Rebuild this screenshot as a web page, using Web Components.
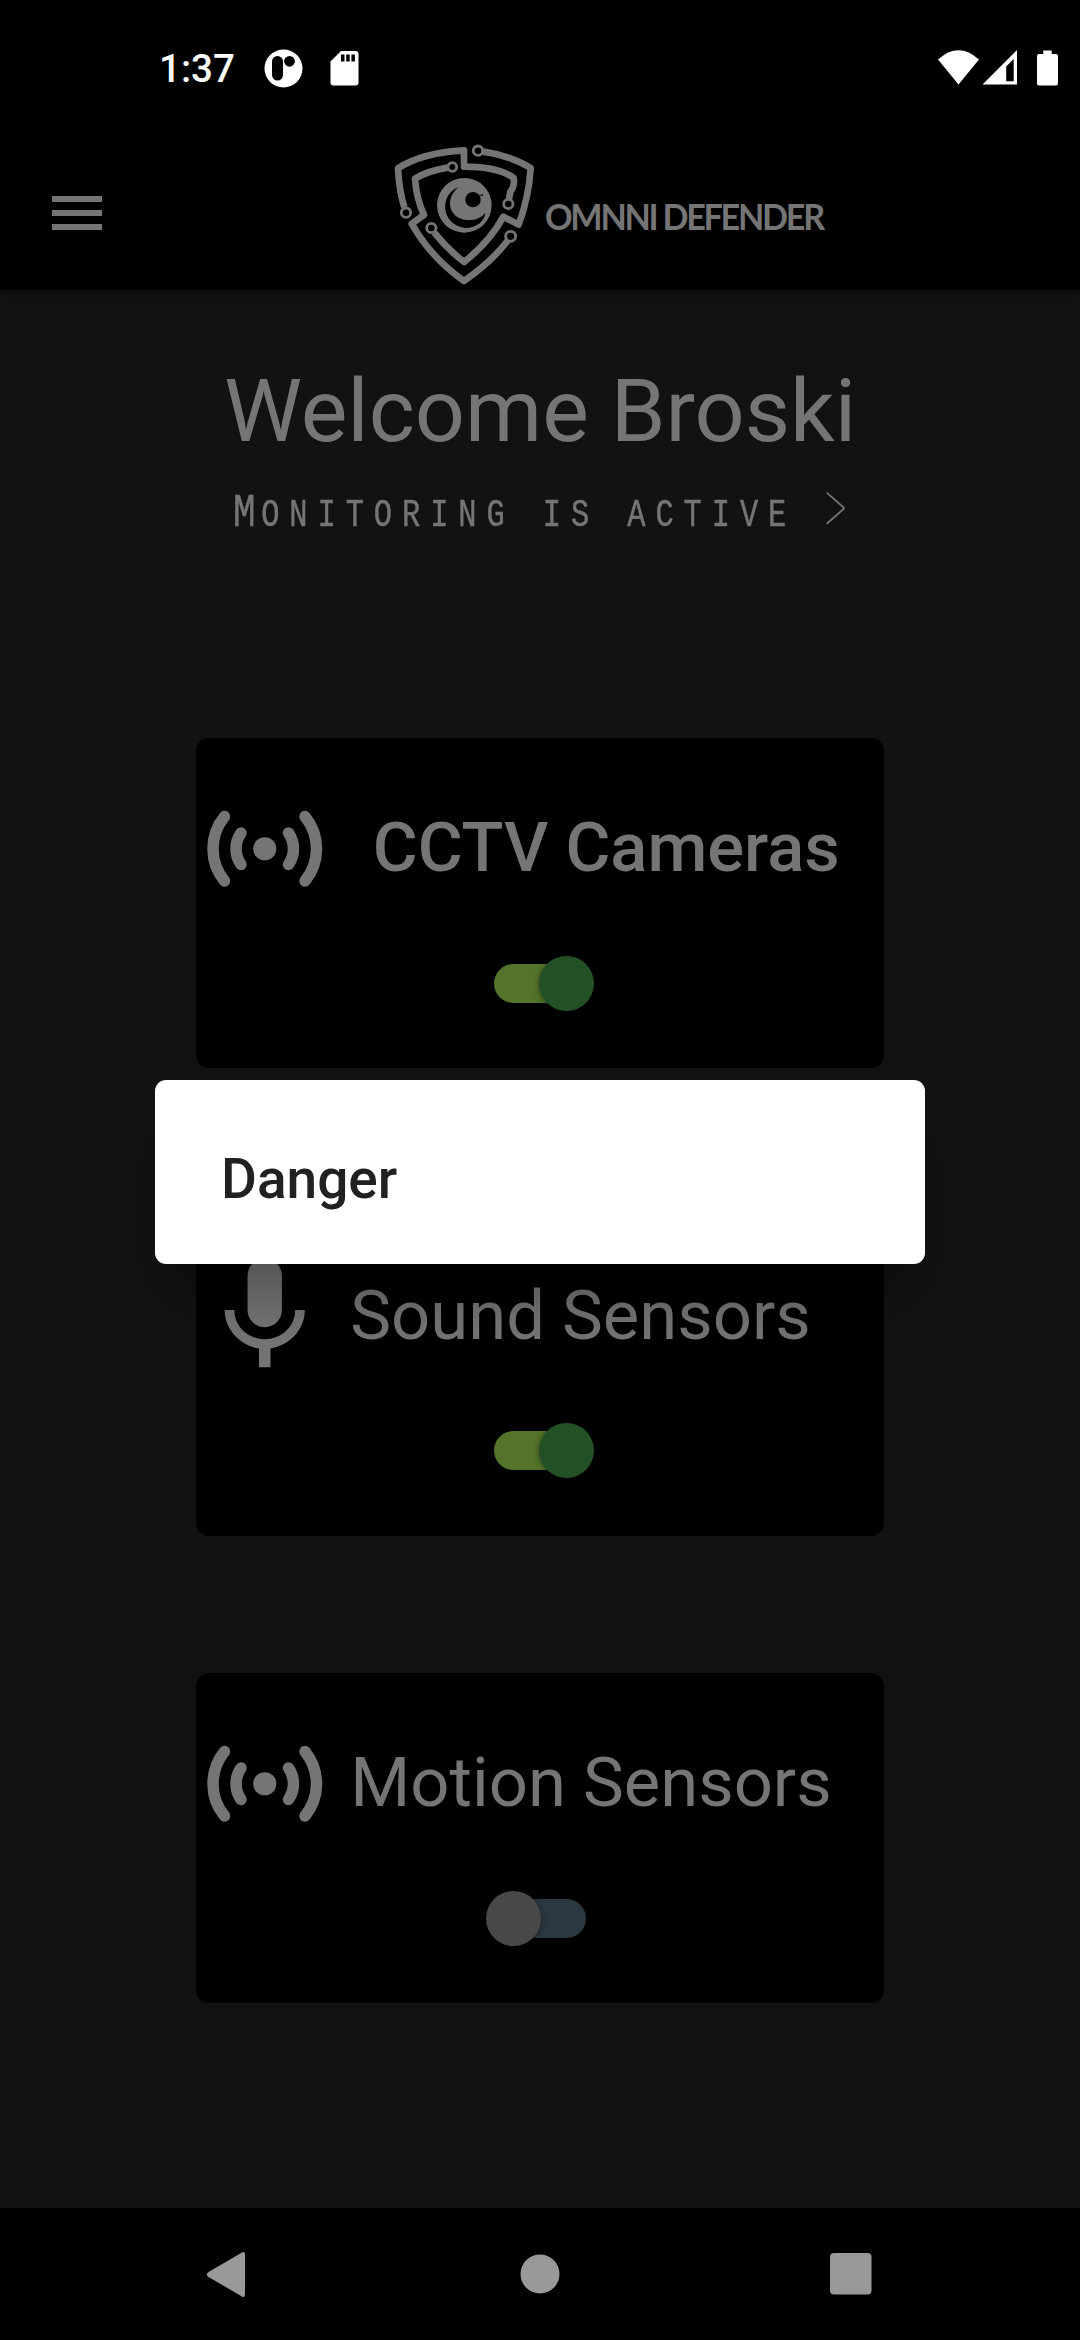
<!DOCTYPE html>
<html lang="en"><head><meta charset="utf-8"><title>Omnni Defender</title>
<style>
html,body{margin:0;background:#121212}
body{width:1080px;height:2340px;overflow:hidden;font-family:Roboto,sans-serif;color:#757575}
</style></head><body>
<omnni-app></omnni-app>
<script>
const define=(name,html)=>customElements.define(name,class extends HTMLElement{
  constructor(){super();this.attachShadow({mode:'open'}).innerHTML=html;}
});

define('status-bar',`<style>
:host{display:flex;height:136px;background:#000;color:#fff;box-sizing:border-box;padding:45px 16px 0 159px}
.time{font:500 38.5px/48px Roboto,sans-serif;width:105px}
.left{flex:1;display:flex}svg{display:block;fill:#fff}
</style><div class="left"><span class="time">1:37</span>
<svg width="100" height="46" viewBox="264 45 100 46"><circle cx="283.5" cy="68.5" r="19"/><rect x="272" y="56" width="11" height="24.5" rx="5.5" fill="#000"/><circle cx="289.5" cy="61.3" r="5.4" fill="#000"/>
<path d="M341 51h14.500a3 3 0 0 1 3 3v28.500a3 3 0 0 1-3 3h-22a3 3 0 0 1-3-3v-21z"/><path d="M341 54.500h3.500v7h-3.500zM346.200 54.500h3.500v7h-3.500zM351.400 54.500h3.500v7h-3.500z" fill="#000"/></svg></div>
<svg width="130" height="46" viewBox="934 45 130 46"><path d="M938 59.500Q958.500 41 979 59.500L958.500 84.500z"/><path d="M1017 50V84.500H982.500zM1013.700 59L1006.200 66.500V81.300H1013.700z" fill-rule="evenodd"/><path d="M1043.300 50.500h8.400v3.500h4.300a2 2 0 0 1 2 2v27.500a2 2 0 0 1-2 2h-17a2 2 0 0 1-2-2v-27.500a2 2 0 0 1 2-2h4.300z"/></svg>`);

define('omnni-logo',`<style>
:host{display:flex;align-items:flex-start}
.name{font:700 36px/44px Lato,sans-serif;letter-spacing:-2.4px;white-space:nowrap;margin-top:54px;transform:scaleX(.95);transform-origin:0 50%}
svg{display:block}</style>
<svg width="160" height="150" viewBox="0 0 480 450" fill="none" stroke="#757575" stroke-width="20" stroke-linejoin="round">
<path d="M58 202Q42 150 39 85Q110 38 237 31V80Q340 80 386 114Q390 138 376 155L372 178"/>
<path d="M188 83Q130 92 90 116Q94 175 117 225L80 251Q135 350 237 423Q320 365 368 302"/>
<path d="M294 35Q380 48 437 84Q432 170 401 254L355 230Q315 305 237 366Q185 325 148 278"/>
<g stroke-width="8.5" fill="#000"><circle cx="63" cy="218" r="14"/><circle cx="202" cy="81" r="13"/><circle cx="279" cy="32" r="14"/><circle cx="370" cy="192" r="14"/><circle cx="377" cy="289" r="15"/><circle cx="139" cy="264" r="14"/></g>
<g stroke="none"><circle cx="238" cy="196" r="82" fill="#757575"/><path d="M221 141C162 163 167 254 240 264C275 264 300 242 301 218C289 235 266 242 245 240C190 234 178 176 221 141Z" fill="#000"/><circle cx="264" cy="179" r="23" fill="#000"/><path d="M280 166l14-3v5z" fill="#000"/></g></svg>
<span class="name"><slot></slot></span>`);

define('app-header',`<style>
:host{display:flex;height:154px;background:#000;box-sizing:border-box;padding:4px 0 0 52px;box-shadow:0 2px 10px rgba(0,0,0,.5);position:relative}
.menu{width:50px;height:34px;margin:56px 283px 0 0;display:flex;flex-direction:column;justify-content:space-between}
i{height:6px;background:#757575}
</style><div class="menu"><i></i><i></i><i></i></div><omnni-logo><slot></slot></omnni-logo>`);

define('welcome-panel',`<style>
:host{display:flex;flex-direction:column;align-items:center;padding-top:69px;height:379px;box-sizing:border-box}
h1{margin:0;font:400 88px/104px Roboto,sans-serif;white-space:nowrap}
p{display:block;margin:20px 0 0;width:614px;font:38px/60px "Liberation Mono",monospace;letter-spacing:12.4px;white-space:pre;transform:scaleX(.8);transform-origin:0 50%}
.row{width:614px;height:80px}
.txt{display:inline-block;text-transform:uppercase;-webkit-text-stroke:.5px #757575}
.txt::first-letter{font-size:47px;letter-spacing:7px}
.go{display:inline-block;font-family:Roboto,sans-serif;font-weight:100;transform:scale(1.45,2.25);transform-origin:0 58%}
</style><h1>Welcome Broski</h1><div class="row"><p><span class="txt">Monitoring is active </span><span class="go">&gt;</span></p></div>`);

define('toggle-switch',`<style>
:host{display:flex;align-items:center;position:relative;width:99.500px;height:56px}
.track{width:91px;height:39px;border-radius:20px;background:#53742a}
.thumb{position:absolute;top:.5px;width:55px;height:55px;border-radius:50%;background:#245026;right:0;box-shadow:0 1px 6px rgba(0,0,0,.45)}
:host([off]){justify-content:flex-end;margin-right:16px}
:host([off]) .track{background:#2c3840}
:host([off]) .thumb{left:0;right:auto;background:#484848}
</style><div class="track"></div><div class="thumb"></div>`);

define('signal-icon',`<style>:host,svg{display:block;width:137.500px;height:137.500px}</style>
<svg viewBox="-68.750 -68.750 137.500 137.500" fill="none" stroke="#757575" stroke-width="11.500" stroke-linecap="round"><circle r="11.600" fill="#757575" stroke="none"/><path d="M-40.300-32.200A51 51 0 0 0-40.300 32.200M40.300-32.200A51 51 0 0 1 40.300 32.200M-23.800-15.700A27.500 27.500 0 0 0-23.800 15.700M23.800-15.700A27.500 27.500 0 0 1 23.800 15.700"/></svg>`);

define('mic-icon',`<style>:host,svg{display:block;width:137.500px;height:137.500px}</style>
<svg viewBox="0 0 24 24" fill="#757575"><path d="M12 14c1.660 0 2.990-1.340 2.990-3L15 5c0-1.660-1.340-3-3-3S9 3.340 9 5v6c0 1.660 1.340 3 3 3zm5.300-3c0 3-2.540 5.100-5.300 5.100S6.700 14 6.700 11H5c0 3.410 2.720 6.230 6 6.720V21h2v-3.280c3.280-.480 6-3.300 6-6.720h-1.700z"/></svg>`);

define('sensor-card',`<style>
:host{display:flex;flex-direction:column;align-items:center;width:687.500px;height:330px;background:#000;border-radius:13px;box-sizing:border-box;padding-top:41.500px}
.head{display:flex;align-items:center;align-self:stretch;height:137.500px}
.title{font:400 68.750px/80px Roboto,sans-serif;white-space:nowrap;margin-left:var(--gap,16.5px)}
.switch{margin-top:38px;padding-left:8px}
:host([strong]) .title{font-weight:500}
</style><div class="head"><slot name="icon"></slot><span class="title"><slot></slot></span></div><div class="switch"><slot name="switch"></slot></div>`);

define('alert-dialog',`<style>
:host{display:block;position:absolute;left:155px;top:1080px;width:770px;height:184px;box-sizing:border-box;padding:69px 66px 0;background:#fff;border-radius:11px;box-shadow:0 40px 60px -10px rgba(0,0,0,.3)}
h2{margin:0;font:500 55px/60px Roboto,sans-serif;color:#212121}
</style><h2><slot></slot></h2>`);

define('nav-bar',`<style>:host{display:flex;justify-content:space-between;align-items:center;height:132px;background:#000;box-sizing:border-box;padding:0 208px 0 206px}svg{display:block;fill:#999}</style>
<svg width="40" height="46" viewBox="206 2251 40 46"><path d="M241.500 2252.800Q245 2250.500 245 2254.500V2294.500Q245 2298.500 241.500 2296.200L208.500 2277Q205 2274.500 208.500 2272z"/></svg>
<svg width="40" height="40" viewBox="0 0 40 40" style="margin-left:3px"><circle cx="20" cy="20" r="19.500"/></svg>
<svg width="42" height="42" viewBox="0 0 42 42"><rect width="41.500" height="41.500" rx="4"/></svg>`);

define('omnni-app',`<style>
:host{display:flex;flex-direction:column;width:1080px;height:2340px;position:relative;background:#121212}
main{flex:1;display:flex;flex-direction:column;align-items:center}
.cards{display:flex;flex-direction:column;gap:137.500px;padding-top:69px}
</style><status-bar></status-bar><app-header>OMNNI DEFENDER</app-header>
<main><welcome-panel></welcome-panel><div class="cards">
<sensor-card strong style="--gap:39px"><signal-icon slot="icon"></signal-icon>CCTV Cameras<toggle-switch slot="switch"></toggle-switch></sensor-card>
<sensor-card><mic-icon slot="icon"></mic-icon>Sound Sensors<toggle-switch slot="switch"></toggle-switch></sensor-card>
<sensor-card><signal-icon slot="icon"></signal-icon>Motion Sensors<toggle-switch slot="switch" off></toggle-switch></sensor-card>
</div></main><nav-bar></nav-bar><alert-dialog>Danger</alert-dialog>`);
</script></body></html>
